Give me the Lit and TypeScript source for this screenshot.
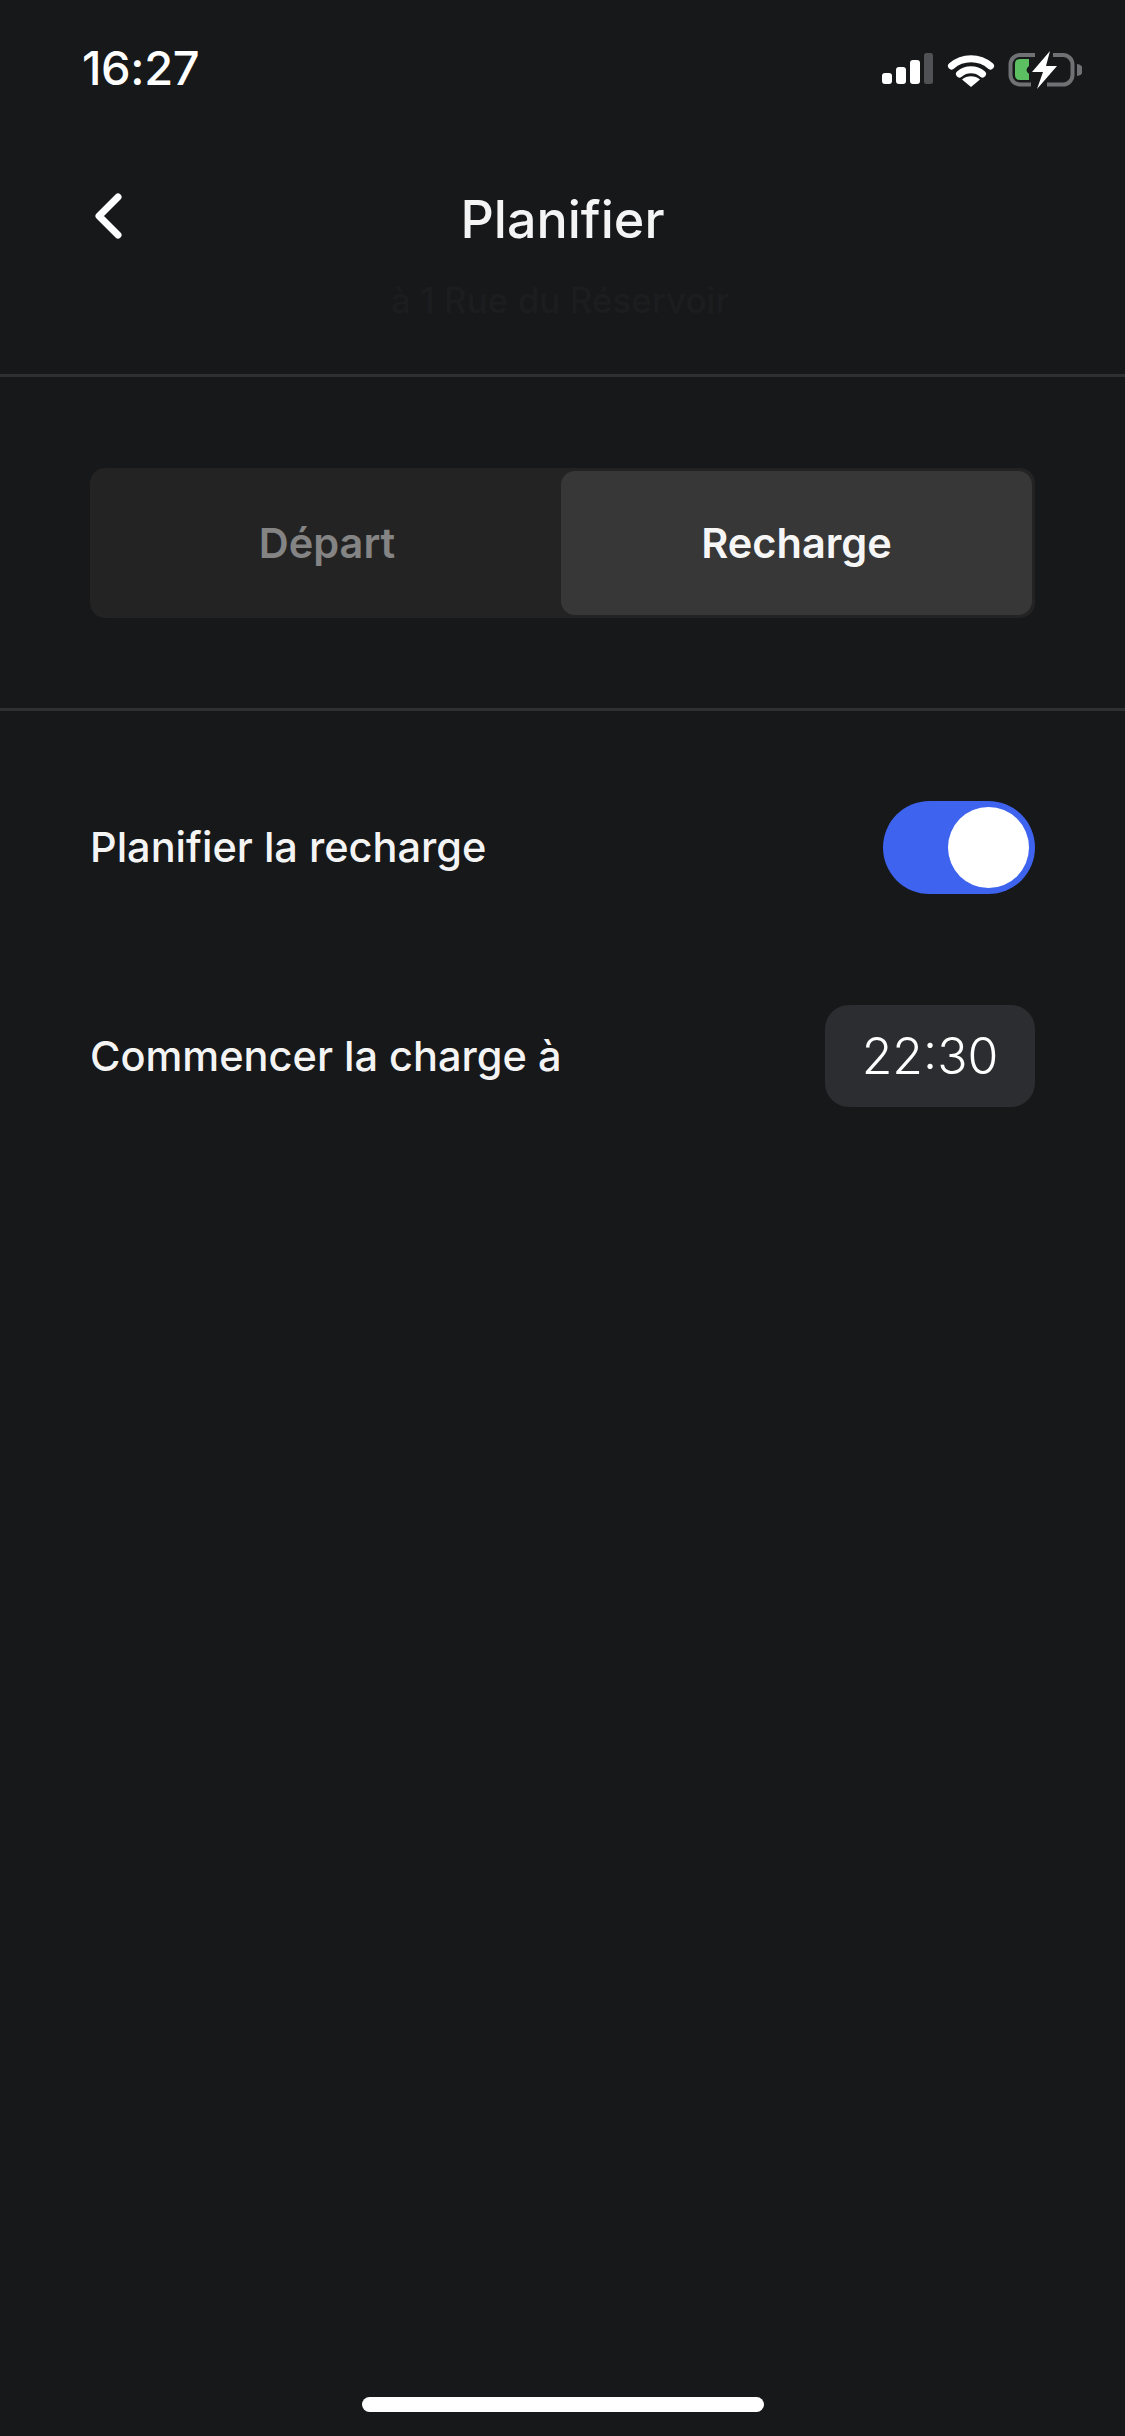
import { LitElement, html, css } from "lit";
import { customElement } from "lit/decorators.js";

@customElement("app-root")
export class AppRoot extends LitElement {
  static styles = css`
    :host {
      display: block;
      width: 1125px;
      height: 2436px;
      background: #17181a;
      font-family: Inter, "Liberation Sans", sans-serif;
      color: #f4f4f4;
      overflow: hidden;
    }
    .page { display: flex; flex-direction: column; height: 2436px; }
    .status {
      height: 93px; padding: 0 43px 3px 82px; box-sizing: border-box;
      display: flex; align-items: flex-end; justify-content: space-between;
    }
    .clock { font-size: 47px; font-weight: 500; line-height: 50px; color: #fff; letter-spacing: -0.4px; margin-bottom: -3px; }
    .status svg { display: block; }
    .nav {
      height: 284px; box-sizing: border-box; position: relative;
      border-bottom: 3px solid #2f3032;
      display: flex; flex-direction: column; align-items: center;
    }
    .back { position: absolute; left: 92px; top: 98px; display: block; }
    .title { margin-top: 94px; font-size: 52px; font-weight: 500; line-height: 66px; }
    .ghost { margin-top: 25px; margin-right: 5px; font-size: 35px; font-weight: 500; line-height: 44px; color: #1c1d1f; }
    .seg-wrap {
      height: 334px; box-sizing: border-box; padding: 91px 90px 0;
      border-bottom: 3px solid #2f3032;
    }
    .seg {
      height: 150px; box-sizing: border-box; padding: 3px;
      background: #232324; border-radius: 15px;
      display: grid; grid-template-columns: 1fr 471px;
    }
    .tab {
      display: flex; align-items: center; justify-content: center;
      font-size: 41.500px; font-weight: 600; color: #848484; border-radius: 14px;
    }
    .tab.on { background: #373737; color: #f6f6f6; }
    .rows { padding: 88px 90px 0; display: flex; flex-direction: column; }
    .row { display: flex; align-items: center; justify-content: space-between; font-size: 41.500px; font-weight: 500; }
    .row.first { height: 96px; }
    .row.second { height: 102px; margin-top: 110px; }
    .toggle {
      width: 152px; height: 93px; box-sizing: border-box; padding: 6px;
      background: #3e63ee; border-radius: 47px;
      display: flex; justify-content: flex-end; align-items: center;
    }
    .knob { width: 81px; height: 81px; border-radius: 50%; background: #fff; }
    .time {
      width: 210px; height: 102px; background: #2c2d30; border-radius: 24px;
      display: flex; align-items: center; justify-content: center;
      font-size: 50px; font-weight: 300; color: #fff;
    }
    .spacer { flex: 1; }
    .home { display: flex; justify-content: center; padding-bottom: 24px; }
    .bar { width: 402px; height: 15px; border-radius: 8px; background: #fff; }
  `;

  render() {
    return html`
      <div class="page">
        <div class="status">
          <span class="clock">16:27</span>
          <svg width="200" height="40" viewBox="882 50 200 40">
            <rect x="882" y="73" width="10" height="11" rx="3" fill="#fff" />
            <rect x="896" y="67" width="10" height="17" rx="3" fill="#fff" />
            <rect x="910" y="60" width="10" height="24" rx="3" fill="#fff" />
            <rect x="924" y="53" width="9" height="31" rx="2.500" fill="#505154" />
            <path d="M951.500 66 a30 30 0 0 1 39 0" fill="none" stroke="#fff" stroke-width="7" stroke-linecap="round" />
            <path d="M959.500 74 a18 18 0 0 1 23 0" fill="none" stroke="#fff" stroke-width="7" stroke-linecap="round" />
            <path d="M962 79.500 a14 14 0 0 1 18 0 L971 87 Z" fill="#fff" />
            <path d="M1035 55 H1020 a9.500 9.500 0 0 0 -9.500 9.500 V75 a9.500 9.500 0 0 0 9.500 9.500 H1031 M1053 55 H1063 a9.500 9.500 0 0 1 9.500 9.500 V75 a9.500 9.500 0 0 1 -9.500 9.500 H1047"
              fill="none" stroke="#707174" stroke-width="4" />
            <path d="M1077 64 a6 6 0 0 1 0 12 Z" fill="#707174" />
            <path d="M1020 59 H1029 V66 Q1024 70 1029 74 V80 H1020 Q1015 80 1015 75 V64 Q1015 59 1020 59 Z" fill="#5cbf62" />
            <path d="M1050 51 L1032 72 H1043 L1037 89 L1057 66 H1046 Z" fill="#fff" />
          </svg>
        </div>
        <div class="nav">
          <svg class="back" width="34" height="50" viewBox="0 0 34 50">
            <path d="M26 6 L7 25 L26 44" fill="none" stroke="#fff" stroke-width="7" stroke-linecap="round" stroke-linejoin="round" />
          </svg>
          <span class="title">Planifier</span>
          <span class="ghost">à 1 Rue du Réservoir</span>
        </div>
        <div class="seg-wrap">
          <div class="seg">
            <div class="tab">Départ</div>
            <div class="tab on">Recharge</div>
          </div>
        </div>
        <div class="rows">
          <div class="row first">
            <span>Planifier la recharge</span>
            <div class="toggle"><div class="knob"></div></div>
          </div>
          <div class="row second">
            <span>Commencer la charge à</span>
            <div class="time">22:30</div>
          </div>
        </div>
        <div class="spacer"></div>
        <div class="home"><div class="bar"></div></div>
      </div>
    `;
  }
}
